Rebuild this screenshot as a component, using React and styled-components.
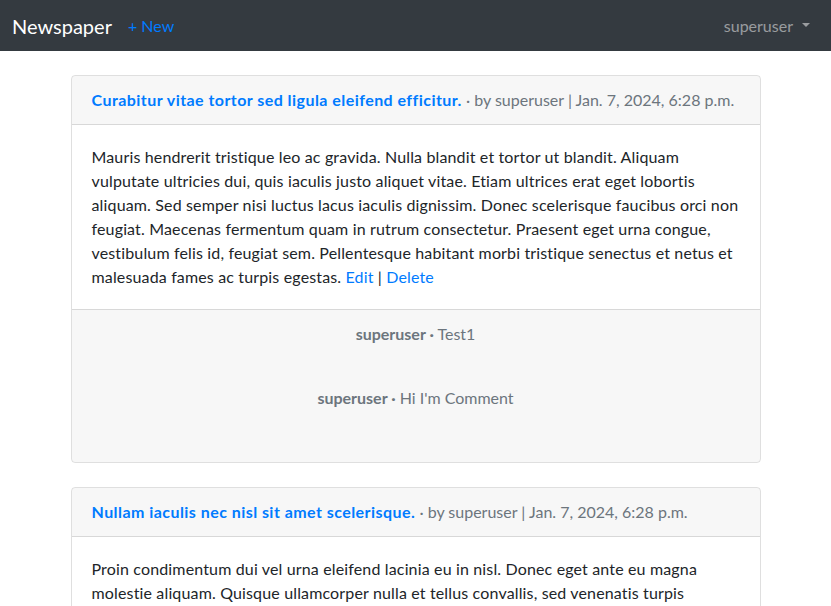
import React from "react";
import styled, { createGlobalStyle } from "styled-components";

const GlobalStyle = createGlobalStyle`
  * { box-sizing: border-box; }
  body {
    margin: 0;
    background: #fff;
    font-family: Lato, "Noto Sans", sans-serif;
    font-size: 16px;
    line-height: 1.5;
    color: #212529;
  }
  a { color: #007bff; text-decoration: none; }
`;

const posts = [
  {
    id: 1,
    title: "Curabitur vitae tortor sed ligula eleifend efficitur.",
    author: "superuser",
    date: "Jan. 7, 2024, 6:28 p.m.",
    body:
      "Mauris hendrerit tristique leo ac gravida. Nulla blandit et tortor ut blandit. Aliquam vulputate ultricies dui, quis iaculis justo aliquet vitae. Etiam ultrices erat eget lobortis aliquam. Sed semper nisi luctus lacus iaculis dignissim. Donec scelerisque faucibus orci non feugiat. Maecenas fermentum quam in rutrum consectetur. Praesent eget urna congue, vestibulum felis id, feugiat sem. Pellentesque habitant morbi tristique senectus et netus et malesuada fames ac turpis egestas.",
    comments: [
      { author: "superuser", text: "Test1" },
      { author: "superuser", text: "Hi I'm Comment" },
    ],
  },
  {
    id: 2,
    title: "Nullam iaculis nec nisl sit amet scelerisque.",
    author: "superuser",
    date: "Jan. 7, 2024, 6:28 p.m.",
    body:
      "Proin condimentum dui vel urna eleifend lacinia eu in nisl. Donec eget ante eu magna molestie aliquam. Quisque ullamcorper nulla et tellus convallis, sed venenatis turpis malesuada. Vivamus posuere nisi vel arcu ultrices, sed volutpat nisi ultricies. Sed auctor justo sed dolor porta, non bibendum sapien fermentum.",
    comments: [{ author: "superuser", text: "Nice" }],
  },
];

export default function App() {
  return (
    <>
      <GlobalStyle />
      <Navbar>
        <NavLeft>
          <Brand href="#">Newspaper</Brand>
          <NavLink href="#">+ New</NavLink>
        </NavLeft>
        <UserToggle href="#">superuser</UserToggle>
      </Navbar>
      <Container>
        {posts.map((post) => (
          <Card key={post.id}>
            <CardHeader>
              <Title href="#">{post.title}</Title>
              <Meta>
                {" "}
                · by {post.author} | {post.date}
              </Meta>
            </CardHeader>
            <CardBody>
              {post.body} <a href="#">Edit</a> | <a href="#">Delete</a>
            </CardBody>
            <CardFooter>
              {post.comments.map((c, i) => (
                <Comment key={i}>
                  <strong>{c.author} ·</strong> {c.text}
                </Comment>
              ))}
            </CardFooter>
          </Card>
        ))}
      </Container>
    </>
  );
}

const Navbar = styled.nav`
  height: 51px;
  background: #343a40;
  display: flex;
  align-items: center;
  justify-content: space-between;
  padding: 0 21px 0 12px;
`;

const NavLeft = styled.div`
  display: flex;
  align-items: center;
  gap: 16px;
`;

const Brand = styled.a`
  color: #fff;
  font-size: 20px;
  line-height: 30px;
`;

const NavLink = styled.a`
  color: #007bff;
  font-size: 16px;
`;

const UserToggle = styled.a`
  color: rgba(255, 255, 255, 0.5);
  font-size: 16px;
  &::after {
    content: "";
    display: inline-block;
    vertical-align: 0.255em;
    border-top: 0.3em solid;
    border-right: 0.3em solid transparent;
    border-left: 0.3em solid transparent;
    border-bottom: 0;
    margin-left: 9px;
  }
`;

const Container = styled.main`
  max-width: 720px;
  margin: 24px auto 0;
  padding: 0 15px;
`;

const Card = styled.article`
  border: 1px solid rgba(0, 0, 0, 0.125);
  border-radius: 4px;
  margin-bottom: 24px;
  overflow: hidden;
`;

const CardHeader = styled.header`
  background: rgba(0, 0, 0, 0.03);
  border-bottom: 1px solid rgba(0, 0, 0, 0.125);
  padding: 12px 20px;
`;

const Title = styled.a`
  font-weight: 700;
  letter-spacing: 0.45px;
`;

const Meta = styled.span`
  color: #6c757d;
`;

const CardBody = styled.p`
  margin: 0;
  padding: 20px;
  letter-spacing: 0.15px;
`;

const CardFooter = styled.footer`
  background: rgba(0, 0, 0, 0.03);
  border-top: 1px solid rgba(0, 0, 0, 0.125);
  padding: 12px 20px;
  text-align: center;
  color: #6c757d;
`;

const Comment = styled.p`
  margin: 0 0 40px;
`;
